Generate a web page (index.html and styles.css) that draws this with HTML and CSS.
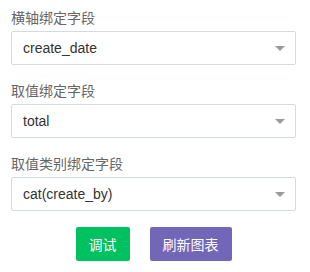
FILE: index.html
```html
<!DOCTYPE html>
<html lang="zh">

<head>
  <title>图表字段绑定</title>
  <meta charset="utf-8">
  <meta name="viewport" content="width=device-width, initial-scale=1.0">
  <link rel="stylesheet" href="styles.css">
</head>

<body>
  <div class="panel">
    <div class="field">
      <label class="field-label">横轴绑定字段</label>
      <div class="select-box">
        <span class="select-value">create_date</span>
        <svg class="select-arrow" width="10" height="5" viewBox="0 0 10 5"><path d="M0 0 L10 0 L5 5 Z" fill="#999"/></svg>
      </div>
    </div>

    <div class="field">
      <label class="field-label">取值绑定字段</label>
      <div class="select-box">
        <span class="select-value">total</span>
        <svg class="select-arrow" width="10" height="5" viewBox="0 0 10 5"><path d="M0 0 L10 0 L5 5 Z" fill="#999"/></svg>
      </div>
    </div>

    <div class="field">
      <label class="field-label">取值类别绑定字段</label>
      <div class="select-box">
        <span class="select-value">cat(create_by)</span>
        <svg class="select-arrow" width="10" height="5" viewBox="0 0 10 5"><path d="M0 0 L10 0 L5 5 Z" fill="#999"/></svg>
      </div>
    </div>

    <div class="actions">
      <button class="btn btn-debug">调试</button>
      <button class="btn btn-refresh">刷新图表</button>
    </div>
  </div>
</body>

</html>
```

FILE: styles.css
```css
body {
  margin: 0;
  background: #fff;
  font-family: "Liberation Sans", Arial, "Noto Sans CJK SC", sans-serif;
}

.panel {
  padding: 8px 14px 0 11px;
}

.field {
  margin-bottom: 16px;
}

.field:last-of-type {
  margin-bottom: 15px;
}

.field-label {
  display: block;
  font-size: 14px;
  line-height: 20px;
  color: #666;
  margin-bottom: 3px;
}

.select-box {
  display: flex;
  align-items: center;
  justify-content: space-between;
  height: 34px;
  box-sizing: border-box;
  border: 1px solid #d2dcdf;
  border-radius: 2px;
  padding: 0 10px 0 11px;
}

.select-value {
  font-size: 14px;
  color: #333;
}

.select-arrow {
  display: block;
}

.actions {
  display: flex;
  justify-content: center;
  gap: 20px;
}

.btn {
  height: 34px;
  padding: 0 13px;
  border: none;
  border-radius: 2px;
  color: #fff;
  font-size: 14px;
  font-family: "Liberation Sans", Arial, "Noto Sans CJK SC", sans-serif;
  cursor: pointer;
}

.btn-debug {
  background-color: #00c160;
}

.btn-refresh {
  background-color: #7266b8;
}
```
